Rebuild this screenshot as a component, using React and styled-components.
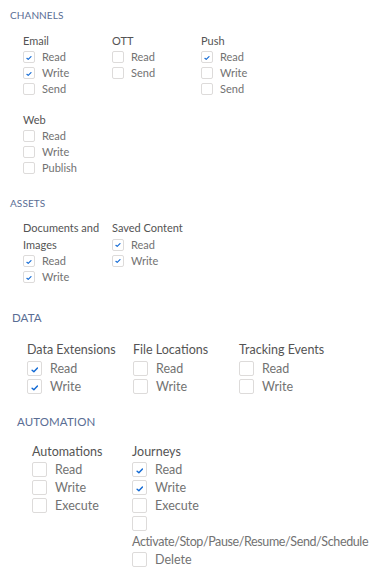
import styled, { createGlobalStyle } from "styled-components";

const GlobalStyle = createGlobalStyle`
  body {
    margin: 0;
    background: #ffffff;
    font-family: Lato, "Open Sans", "Liberation Sans", sans-serif;
  }
`;

const Page = styled.div`
  padding-top: 7px;
  width: 377px;
`;

const Section = styled.section`
  padding-left: ${(p) => p.$indent}px;
  margin-bottom: ${(p) => p.$after}px;
`;

const Heading = styled.h2`
  margin: 0 0 ${(p) => p.$gap}px 0;
  font-size: ${(p) => (p.$lg ? "11.5px" : "10px")};
  line-height: ${(p) => (p.$lg ? "18px" : "16px")};
  font-weight: 400;
  color: #5a6d94;
  letter-spacing: 0.1px;
`;

const Groups = styled.div`
  display: grid;
  grid-template-columns: ${(p) => p.$cols};
  row-gap: ${(p) => p.$rowGap || 0}px;
  padding-left: ${(p) => p.$offset}px;
`;

const Group = styled.div`
  font-size: ${(p) => (p.$lg ? "12.5px" : "11px")};
  min-width: 0;
`;

const GroupTitle = styled.div`
  color: #545454;
  line-height: ${(p) => p.$lh}px;
`;

const Option = styled.label`
  display: block;
  color: #727272;
  line-height: ${(p) => (p.$lg ? 18 : 16)}px;
  letter-spacing: ${(p) => (p.$tight ? "-0.38px" : "0")};
`;

const Box = styled.span`
  display: inline-block;
  vertical-align: middle;
  box-sizing: border-box;
  width: ${(p) => (p.$lg ? 15 : 12)}px;
  height: ${(p) => (p.$lg ? 15 : 12)}px;
  margin: -2px ${(p) => (p.$lg ? 8 : 7)}px 0 0;
  border: 1px solid #dddbda;
  border-radius: 2px;
  background: #fff;
  position: relative;

  svg {
    position: absolute;
    left: 20%;
    top: 26%;
    width: 58%;
    height: 58%;
  }
`;

const Check = () => (
  <svg viewBox="0 0 10 10">
    <path d="M1.5 5.6 L3.8 7.6 L8.6 2.6" fill="none" stroke="#1169d4" strokeWidth="1.9" strokeLinecap="round" strokeLinejoin="round" />
  </svg>
);

const Checkbox = ({ label, checked, lg }) => (
  <Option $lg={lg} $tight={label.length > 20}>
    <Box $lg={lg}>{checked && <Check />}</Box>
    {label}
  </Option>
);

const PermGroup = ({ title, items, lg, titleLh }) => (
  <Group $lg={lg}>
    <GroupTitle $lh={titleLh}>
      {title.map((t) => (
        <div key={t}>{t}</div>
      ))}
    </GroupTitle>
    {items.map(([label, checked]) => (
      <Checkbox key={label} label={label} checked={checked} lg={lg} />
    ))}
  </Group>
);

const App = () => (
  <Page>
    <GlobalStyle />
    <Section $indent={10} $after={19}>
      <Heading $gap={10}>CHANNELS</Heading>
      <Groups $cols="89px 89px 89px" $rowGap={15} $offset={13}>
        <PermGroup title={["Email"]} titleLh={16} items={[["Read", true], ["Write", true], ["Send", false]]} />
        <PermGroup title={["OTT"]} titleLh={16} items={[["Read", false], ["Send", false]]} />
        <PermGroup title={["Push"]} titleLh={16} items={[["Read", true], ["Write", false], ["Send", false]]} />
        <PermGroup title={["Web"]} titleLh={16} items={[["Read", false], ["Write", false], ["Publish", false]]} />
      </Groups>
    </Section>

    <Section $indent={10} $after={24}>
      <Heading $gap={9}>ASSETS</Heading>
      <Groups $cols="89px 89px" $offset={13}>
        <PermGroup title={["Documents and", "Images"]} titleLh={16.5} items={[["Read", true], ["Write", true]]} />
        <PermGroup title={["Saved Content"]} titleLh={16.5} items={[["Read", true], ["Write", true]]} />
      </Groups>
    </Section>

    <Section $indent={12} $after={17}>
      <Heading $lg $gap={12}>DATA</Heading>
      <Groups $cols="106px 106px 106px" $offset={15}>
        <PermGroup lg title={["Data Extensions"]} titleLh={21} items={[["Read", true], ["Write", true]]} />
        <PermGroup lg title={["File Locations"]} titleLh={21} items={[["Read", false], ["Write", false]]} />
        <PermGroup lg title={["Tracking Events"]} titleLh={21} items={[["Read", false], ["Write", false]]} />
      </Groups>
    </Section>

    <Section $indent={17} $after={10}>
      <Heading $lg $gap={12}>AUTOMATION</Heading>
      <Groups $cols="100px 1fr" $offset={15}>
        <PermGroup lg title={["Automations"]} titleLh={18} items={[["Read", false], ["Write", false], ["Execute", false]]} />
        <PermGroup
          lg
          title={["Journeys"]}
          titleLh={18}
          items={[
            ["Read", true],
            ["Write", true],
            ["Execute", false],
            ["Activate/Stop/Pause/Resume/Send/Schedule", false],
            ["Delete", false],
          ]}
        />
      </Groups>
    </Section>
  </Page>
);

export default App;
